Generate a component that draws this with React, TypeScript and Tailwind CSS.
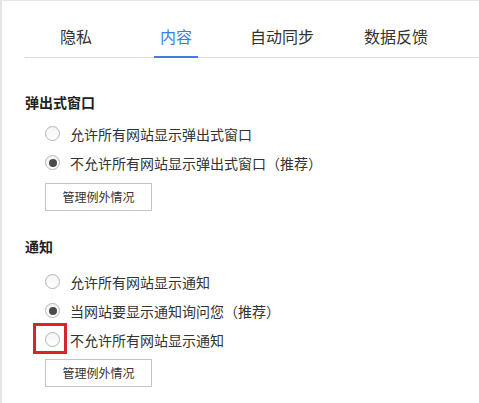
const font = { fontFamily: '"Noto Sans CJK SC", "Microsoft YaHei", sans-serif' };

function Radio({ checked }: { checked?: boolean }) {
  return (
    <span className="w-[15px] h-[15px] rounded-full border border-[#b4b4b4] bg-gradient-to-b from-[#f4f4f4] to-white flex items-center justify-center shrink-0">
      {checked && <span className="w-[8px] h-[8px] rounded-full bg-[#4a4a4a]" />}
    </span>
  );
}

function Option({ label, checked, highlight }: { label: string; checked?: boolean; highlight?: boolean }) {
  return (
    <div className="relative h-[29px] flex items-center pl-[43px] gap-[10px]">
      <Radio checked={checked} />
      <span className="text-[14px] text-[#333] leading-5">{label}</span>
      {highlight && (
        <span className="absolute left-[31px] top-[-2px] w-[34px] h-[31px] border-[3px] border-[#d7262b]" />
      )}
    </div>
  );
}

function ManageButton({ className }: { className: string }) {
  return (
    <button className={`ml-[43px] w-[107px] h-[28px] border border-[#c4c4c4] bg-white text-[12px] text-[#333] ${className}`}>
      管理例外情况
    </button>
  );
}

export default function App() {
  const tabs = [
    { label: '隐私', ml: 'ml-[29px]' },
    { label: '内容', ml: 'ml-[56px]', active: true },
    { label: '自动同步', ml: 'ml-[46px]' },
    { label: '数据反馈', ml: 'ml-[38px]' },
  ];

  return (
    <div className="w-[479px] h-[403px] bg-white border-t border-l-2 border-[#e6e6e6] overflow-hidden" style={font}>
      <div className="pl-[23px]">
        <div className="flex items-end h-[57px] border-b border-[#dedede]">
          {tabs.map((t) => (
            <div
              key={t.label}
              className={`${t.ml} px-[6px] pb-[8px] text-[16px] leading-6 -mb-px ${
                t.active ? 'text-[#3b7fe0] border-b-2 border-[#3b7fe0]' : 'text-[#333] border-b-2 border-transparent'
              }`}
            >
              {t.label}
            </div>
          ))}
        </div>
      </div>

      <div className="flex flex-col items-start">
        <h3 className="mt-[34px] ml-[23px] h-5 leading-5 text-[14px] font-bold text-[#222]">弹出式窗口</h3>
        <div className="mt-[7px] self-stretch">
          <Option label="允许所有网站显示弹出式窗口" />
          <Option label="不允许所有网站显示弹出式窗口（推荐）" checked />
        </div>
        <ManageButton className="mt-[6px]" />

        <h3 className="mt-[25px] ml-[23px] h-5 leading-5 text-[14px] font-bold text-[#222]">通知</h3>
        <div className="mt-[11px] self-stretch">
          <Option label="允许所有网站显示通知" />
          <Option label="当网站要显示通知询问您（推荐）" checked />
          <Option label="不允许所有网站显示通知" highlight />
        </div>
        <ManageButton className="mt-[5px]" />
      </div>
    </div>
  );
}
